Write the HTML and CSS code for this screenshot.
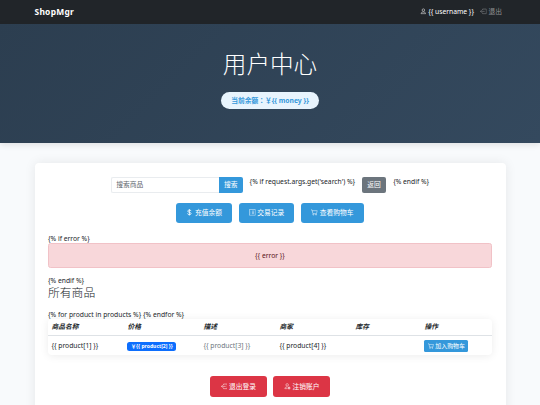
FILE: index.html
```html
<!DOCTYPE html>
<html lang="zh-CN">
<head>
<meta charset="utf-8">
<title>用户中心</title>
<link rel="stylesheet" href="styles.css">
</head>
<body>
<svg class="sprite" aria-hidden="true">
  <symbol id="person" viewBox="0 0 16 16"><path d="M8 8a3 3 0 1 0 0-6 3 3 0 0 0 0 6zM2.500 13.500c0-3 2.500-4 5.500-4s5.500 1 5.500 4z"/></symbol>
  <symbol id="exit" viewBox="0 0 16 16"><path d="M6 5V2.500h9v11H6V11M11 8H1M4 5L1 8l3 3"/></symbol>
  <symbol id="dollar" viewBox="0 0 16 16"><path stroke-width="2" d="M12 5c-.3-2-2-2.500-4-2.500S4.300 3.500 4.300 5.200C4.300 9 12 7 12 10.700c0 2-1.700 2.800-4 2.800s-4-.8-4.200-3M8 .5v15"/></symbol>
  <symbol id="list" viewBox="0 0 16 16"><path d="M1 1h14v14H1zM4 5h1M4 8h1M4 11h1M7 5h5M7 8h5M7 11h5"/></symbol>
  <symbol id="cart" viewBox="0 0 16 16"><path d="M0 2h2.500l2 9H13l2-7H3"/><circle cx="5.500" cy="13.500" r="1.300"/><circle cx="12" cy="13.500" r="1.300"/></symbol>
  <symbol id="gear" viewBox="0 0 16 16"><path d="M7.500 7.500a3 3 0 1 0 0-6 3 3 0 0 0 0 6zM8 13.500H2c0-3 2-4 5.500-4"/><circle cx="12" cy="12" r="2.300" stroke-width="2"/></symbol>
</svg>
<nav class="navbar">
  <span class="brand">ShopMgr</span>
  <div class="nav-links">
    <span><svg class="icon"><use href="#person"/></svg> {{ username }}</span>
    <a class="logout"><svg class="icon"><use href="#exit"/></svg> 退出</a>
  </div>
</nav>
<header class="hero">
  <h1>用户中心</h1>
  <div class="balance">当前余额：￥{{ money }}</div>
</header>
<main class="card">
  <form class="search">
    <div class="input-group"><input type="text" placeholder="搜索商品"><button type="button">搜索</button></div>
    <span>{% if request.args.get('search') %}</span>
    <a class="back">返回</a>
    <span>{% endif %}</span>
  </form>
  <div class="actions">
    <a class="btn"><svg class="icon"><use href="#dollar"/></svg> 充值余额</a>
    <a class="btn"><svg class="icon"><use href="#list"/></svg> 交易记录</a>
    <a class="btn"><svg class="icon"><use href="#cart"/></svg> 查看购物车</a>
  </div>
  <div class="line">{% if error %}</div>
  <div class="alert">{{ error }}</div>
  <div class="line">{% endif %}</div>
  <h3>所有商品</h3>
  <div class="line">{% for product in products %} {% endfor %}</div>
  <table>
    <thead><tr><th>商品名称</th><th>价格</th><th>描述</th><th>商家</th><th>库存</th><th>操作</th></tr></thead>
    <tbody><tr>
      <td>{{ product[1] }}</td>
      <td><span class="badge">￥{{ product[2] }}</span></td>
      <td class="muted">{{ product[3] }}</td>
      <td>{{ product[4] }}</td>
      <td></td>
      <td><a class="add"><svg class="icon"><use href="#cart"/></svg> 加入购物车</a></td>
    </tr></tbody>
  </table>
  <div class="actions account">
    <a class="btn danger"><svg class="icon"><use href="#exit"/></svg> 退出登录</a>
    <a class="btn danger"><svg class="icon"><use href="#gear"/></svg> 注销账户</a>
  </div>
</main>
</body>
</html>
```
FILE: styles.css
```css
* { box-sizing: border-box; }
html { overflow: hidden; }
body {
  height: 405px;
  overflow: hidden;
  margin: 0;
  background: #f8fafc;
  color: #212529;
  font: 6.75px/10.1px "Noto Sans", "Noto Sans CJK SC", sans-serif;
}
.sprite { display: none; }
.icon {
  width: 6.75px;
  height: 6.75px;
  vertical-align: -1px;
  fill: none;
  stroke: currentColor;
  stroke-width: 1.2;
}
.navbar {
  height: 24px;
  padding: 0 38px 0 34.500px;
  display: flex;
  align-items: center;
  justify-content: space-between;
  background: #212529;
  color: #fff;
}
.brand { font-size: 8.44px; font-weight: 700; letter-spacing: .25px; }
.nav-links { display: flex; gap: 6px; }
.logout { color: #909294; }
.hero {
  height: 119px;
  padding-top: 26px;
  display: flex;
  flex-direction: column;
  align-items: center;
  background: linear-gradient(135deg, #2c3e50, #34495e);
  box-shadow: 0 2px 6px rgba(0, 0, 0, .1);
  color: #fff;
}
h1 { margin: 0; font-size: 23.600px; line-height: 28px; font-weight: 300; }
.balance {
  height: 17px;
  margin-top: 14px;
  padding: 0 10px;
  border-radius: 9px;
  background: #e8f4fd;
  color: #3498db;
  font-family: "Noto Sans", "Noto Sans CJK TC", sans-serif;
  font-weight: 700;
  line-height: 17px;
}
.balance:lang(zh) { font-feature-settings: "locl" 0; }
.card {
  height: 270px;
  margin: 20px 34.500px 0;
  padding: 13.500px;
  border-radius: 4px;
  background: #fff;
  box-shadow: 0 0 12px rgba(0, 0, 0, .08);
}
.search { display: flex; justify-content: center; gap: 6.750px; height: 16px; margin: 0; }
.input-group { display: flex; width: 132px; }
.input-group input {
  flex: 1;
  min-width: 0;
  padding: 1px 4.500px 0;
  border: 1px solid #e9ecef;
  border-right: 0;
  border-radius: 2px 0 0 2px;
  font: inherit;
}
.input-group input::placeholder { color: #60666c; opacity: 1; }
.input-group button {
  width: 24px;
  padding: 1px 0 0;
  border: 0;
  border-radius: 0 2px 2px 0;
  background: #3498db;
  color: #fff;
  font: inherit;
}
.back {
  width: 24.500px;
  border-radius: 2px;
  background: #6c757d;
  color: #fff;
  text-align: center;
  line-height: 16px;
}
.actions { display: flex; justify-content: center; gap: 6.750px; margin-top: 10px; }
.btn {
  height: 20px;
  padding: 0 10.100px;
  border-radius: 3px;
  background: #3498db;
  color: #fff;
  line-height: 20px;
}
.line { height: 10px; white-space: nowrap; line-height: 12px; }
.actions + .line { margin-top: 10.500px; }
.alert {
  height: 25px;
  margin-bottom: 6.750px;
  border: 1px solid #f1c2c7;
  border-radius: 2.500px;
  background: #f8d7da;
  color: #58151c;
  text-align: center;
  line-height: 23px;
}
h3 {
  margin: 0 0 10px;
  font-size: 11.800px;
  line-height: 14px;
  font-weight: 300;
}
table {
  width: 100%;
  table-layout: fixed;
  border-collapse: separate;
  border-spacing: 0;
  border-radius: 4px;
  box-shadow: 0 1px 8px rgba(0, 0, 0, .08);
}
th, td { padding: 0 3.400px; text-align: left; white-space: nowrap; }
th { height: 17.500px; padding-top: 1px; border-bottom: 1px solid #dee2e6; font-style: italic; font-weight: 700; }
td { height: 18.500px; padding-top: 1px; }
th:nth-child(-n+4) { width: 76px; }
th:nth-child(5) { width: 69px; }
.muted { color: #6c757d; }
.badge {
  display: block;
  width: 49px;
  height: 9px;
  border-radius: 2.500px;
  background: #0d6efd;
  color: #fff;
  font-size: 5.060px;
  font-weight: 700;
  line-height: 9px;
  text-align: center;
}
.add {
  display: block;
  width: 44px;
  height: 12px;
  border-radius: 1.500px;
  background: #3498db;
  color: #fff;
  font-size: 5.900px;
  line-height: 12px;
  text-align: center;
}
.add .icon { width: 5.900px; height: 5.900px; }
.account { margin-top: 21px; }
.danger { height: 21px; padding: 0 10.500px; line-height: 21px; background: #dc3545; }
```
